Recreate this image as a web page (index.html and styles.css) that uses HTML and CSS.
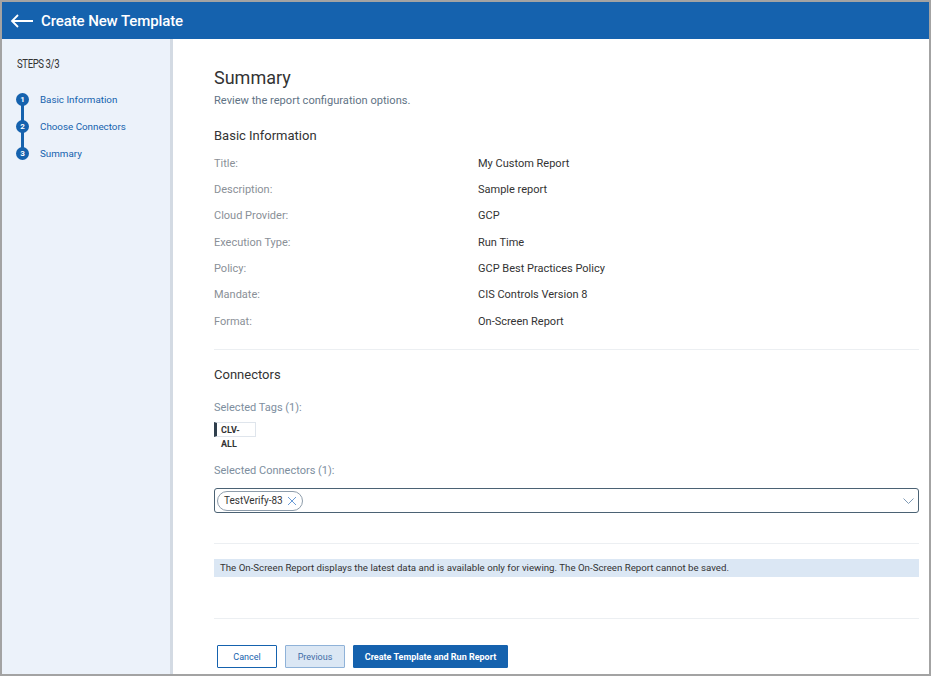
FILE: index.html
```html
<!DOCTYPE html>
<html lang="en">

<head>
    <meta charset="UTF-8">
    <meta name="viewport" content="width=device-width, initial-scale=1.0">
    <link rel="stylesheet" href="styles.css">
    <title>Create New Template</title>
</head>

<body>
    <div class="frame">
        <header class="topbar">
            <svg class="back" width="24" height="14" viewBox="0 0 24 14">
                <path d="M23 7H2M8 1L2 7l6 6" fill="none" stroke="#fff" stroke-width="1.8" />
            </svg>
            <h1>Create New Template</h1>
        </header>

        <div class="layout">
            <aside class="sidebar">
                <div class="steps-title">STEPS 3/3</div>
                <ol class="steps">
                    <li class="step"><span class="dot">1</span>Basic Information</li>
                    <li class="step"><span class="dot">2</span>Choose Connectors</li>
                    <li class="step"><span class="dot">3</span>Summary</li>
                </ol>
            </aside>

            <main class="content">
                <h2 class="page-title">Summary</h2>
                <p class="subtitle">Review the report configuration options.</p>

                <h3 class="section-title">Basic Information</h3>
                <div class="details">
                    <div class="label">Title:</div>
                    <div class="value">My Custom Report</div>
                    <div class="label">Description:</div>
                    <div class="value">Sample report</div>
                    <div class="label">Cloud Provider:</div>
                    <div class="value">GCP</div>
                    <div class="label">Execution Type:</div>
                    <div class="value">Run Time</div>
                    <div class="label">Policy:</div>
                    <div class="value">GCP Best Practices Policy</div>
                    <div class="label">Mandate:</div>
                    <div class="value">CIS Controls Version 8</div>
                    <div class="label">Format:</div>
                    <div class="value">On-Screen Report</div>
                </div>

                <hr class="divider first">

                <h3 class="section-title connectors">Connectors</h3>
                <div class="field-label tags-label">Selected Tags (1):</div>
                <div class="tag">CLV-ALL</div>

                <div class="field-label conn-label">Selected Connectors (1):</div>
                <div class="select">
                    <span class="chip">TestVerify-83
                        <svg width="10" height="10" viewBox="0 0 10 10">
                            <path d="M1 1l8 8M9 1L1 9" stroke="#6a9bd6" stroke-width="1" fill="none" />
                        </svg>
                    </span>
                    <svg class="chevron" width="11" height="6" viewBox="0 0 11 6">
                        <path d="M0.5 0.5l5 5 5-5" stroke="#7f9ab5" stroke-width="1" fill="none" />
                    </svg>
                </div>

                <hr class="divider second">

                <div class="notice">The On-Screen Report displays the latest data and is available only for viewing. The On-Screen Report cannot be saved.</div>

                <hr class="divider third">

                <div class="actions">
                    <button class="btn btn-cancel">Cancel</button>
                    <button class="btn btn-prev">Previous</button>
                    <button class="btn btn-primary">Create Template and Run Report</button>
                </div>
            </main>
        </div>
    </div>
</body>

</html>
```

FILE: styles.css
```css
* {
    margin: 0;
    padding: 0;
    box-sizing: border-box;
}

body {
    font-family: Roboto, "Liberation Sans", sans-serif;
    color: #333;
    background: #fff;
}

.frame {
    width: 931px;
    height: 676px;
    border: 2px solid #a3a3a3;
    display: flex;
    flex-direction: column;
    overflow: hidden;
}

/* header */
.topbar {
    height: 37px;
    background: #1562ae;
    display: flex;
    align-items: center;
    padding-left: 8px;
    flex-shrink: 0;
}

.back {
    margin-right: 7px;
}

.topbar h1 {
    color: #fff;
    font-size: 15px;
    font-weight: 500;
    letter-spacing: -0.1px;
}

.layout {
    flex: 1;
    display: flex;
    min-height: 0;
}

/* steps sidebar */
.sidebar {
    width: 171px;
    flex-shrink: 0;
    background: #ecf2fa;
    border-right: 3px solid #d3dae3;
    padding: 18px 0 0 14px;
}

.steps-title {
    font-size: 12px;
    line-height: 14px;
    letter-spacing: -0.5px;
    transform: scaleX(0.8);
    transform-origin: left;
    color: #333;
    margin-left: 1px;
}

.steps {
    list-style: none;
    margin-top: 15px;
}

.step {
    position: relative;
    height: 27px;
    display: flex;
    align-items: center;
    font-size: 9.8px;
    color: #1562ae;
}

.dot {
    width: 13px;
    height: 13px;
    border-radius: 50%;
    background: #1562ae;
    color: #fff;
    font-size: 8px;
    font-weight: 700;
    display: flex;
    align-items: center;
    justify-content: center;
    margin-right: 11px;
    position: relative;
    z-index: 1;
}

.step + .step::before {
    content: "";
    position: absolute;
    left: 5px;
    top: -14px;
    width: 3px;
    height: 27px;
    background: #1562ae;
}

/* main */
.content {
    flex: 1;
    padding: 28px 10px 0 41px;
}

.page-title {
    font-size: 18px;
    line-height: 22px;
    font-weight: 400;
    color: #333;
}

.subtitle {
    margin-top: 5px;
    font-size: 11.1px;
    line-height: 14px;
    color: #5f7385;
}

.section-title {
    margin-top: 20px;
    font-size: 13px;
    line-height: 16px;
    font-weight: 400;
    color: #333;
}

.details {
    margin-top: 6px;
    display: grid;
    grid-template-columns: 264px 1fr;
    grid-auto-rows: 26.33px;
    font-size: 11px;
    align-items: center;
}

.label {
    color: #8a9097;
}

.value {
    color: #333;
}

.divider {
    border: 0;
    border-top: 1px solid #eceff2;
}

.divider.first {
    margin-top: 15px;
}

.section-title.connectors {
    margin-top: 17px;
}

.field-label {
    font-size: 11px;
    line-height: 14px;
    color: #7d8e9e;
}

.tags-label {
    margin-top: 18px;
}

.tag {
    margin-top: 7px;
    width: 42px;
    height: 15px;
    border: 1px solid #dfe5ec;
    border-left: 3px solid #2f3e4c;
    padding-left: 4px;
    font-size: 9px;
    font-weight: 700;
    line-height: 14px;
    color: #333;
}

.conn-label {
    margin-top: 27px;
}

.select {
    margin-top: 10px;
    height: 25px;
    border: 1px solid #4b6274;
    border-radius: 3px;
    display: flex;
    align-items: center;
    justify-content: space-between;
    padding: 0 4px 0 2px;
}

.chip {
    height: 20px;
    border: 1px solid #8d9caa;
    border-radius: 10px;
    font-size: 10px;
    color: #333;
    display: flex;
    align-items: center;
    gap: 4px;
    padding: 0 5px 0 6px;
}

.divider.second {
    margin-top: 30px;
}

.notice {
    margin-top: 15px;
    height: 18px;
    background: #dbe7f4;
    font-size: 9.7px;
    line-height: 18px;
    padding-left: 6px;
    color: #333;
}

.divider.third {
    margin-top: 41px;
}

.actions {
    margin-top: 26px;
    padding-left: 3px;
    display: flex;
    gap: 8px;
}

.btn {
    height: 23px;
    font-family: Roboto, "Liberation Sans", sans-serif;
    font-size: 9px;
    padding: 0;
    border-radius: 1px;
    white-space: nowrap;
    cursor: pointer;
}

.btn-cancel {
    width: 60px;
    background: #fff;
    border: 1px solid #1562ae;
    color: #1562ae;
}

.btn-prev {
    width: 60px;
    background: #dbe7f4;
    border: 1px solid #8fb2d8;
    color: #3f6ca6;
}

.btn-primary {
    width: 155px;
    background: #1562ae;
    border: 1px solid #1562ae;
    color: #fff;
    font-weight: 700;
}
```
